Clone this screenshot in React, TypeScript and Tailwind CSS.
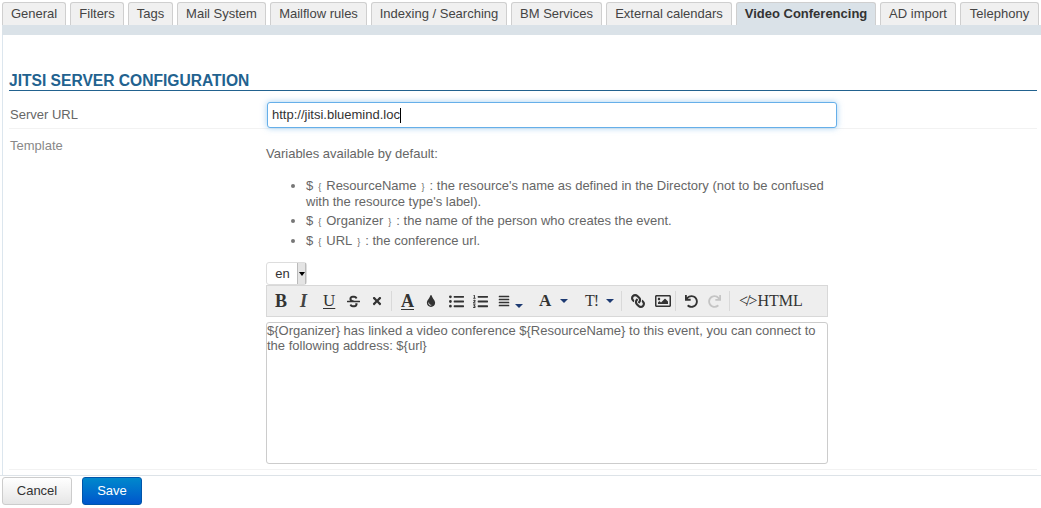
import { FaTimes, FaTint, FaListUl, FaListOl, FaAlignJustify, FaRegImage, FaUndo, FaRedo, FaLink, FaStrikethrough } from "react-icons/fa";

const tabs = [
	{ label: "General", width: "w-[64px]" },
	{ label: "Filters", width: "w-[54px]" },
	{ label: "Tags", width: "w-[45px]" },
	{ label: "Mail System", width: "w-[89px]" },
	{ label: "Mailflow rules", width: "w-[97px]" },
	{ label: "Indexing / Searching", width: "w-[136px]" },
	{ label: "BM Services", width: "w-[91px]" },
	{ label: "External calendars", width: "w-[126px]" },
	{ label: "Video Conferencing", width: "w-[140px]", active: true },
	{ label: "AD import", width: "w-[76px]" },
	{ label: "Telephony", width: "w-[79px]" },
];

const Caret = ({ className }: { className: string }) => (
	<span className={`shrink-0 w-0 h-0 border-x-[4px] border-x-transparent border-t-[4px] border-t-[#1d3a72] ${className}`} />
);

const Sep = ({ className }: { className: string }) => <span className={`shrink-0 w-px h-[20px] bg-[#d9d9d9] ${className}`} />;

const Brace = ({ c }: { c: string }) => <span className="text-[9px] leading-none mx-[5px]">{c}</span>;

const App = () => {
	return (
		<div className="w-[1041px] h-[508px] bg-white flex flex-col overflow-hidden font-['Liberation_Sans',sans-serif] text-[13px] text-[#666]">
			{/* Tabs */}
			<div className="flex gap-1 pl-[2px] pt-[2px] h-[25px] shrink-0">
				{tabs.map((tab) => (
					<div
						key={tab.label}
						className={`${tab.width} h-[23px] shrink-0 flex items-center justify-center rounded-t-[3px] border border-b-0 border-[#cfcfcf] ${
							tab.active ? "bg-[#dae2e8] font-bold text-[#333]" : "bg-[#f0f0f0] text-[#444]"
						}`}
					>
						{tab.label}
					</div>
				))}
			</div>
			<div className="h-[10px] bg-[#dae2e8] ml-[2px] shrink-0" />

			{/* Content */}
			<div className="h-[440px] shrink-0 ml-[2px] border-l border-[#dce6ee] pl-[6px] pr-[4px] pb-[5px] flex flex-col">
				<h2 className="mt-[36px] h-[19px] leading-[20px] text-[15.6px] font-bold text-[#22628f] border-b border-[#22628f] box-content">
					JITSI SERVER CONFIGURATION
				</h2>

				<div className="flex h-[38px] border-b border-[#f2f2f2] shrink-0">
					<div className="w-[258px] pl-px pt-[16px] leading-[16px] text-[#666]">Server URL</div>
					<div className="pt-[11px]">
						<div className="w-[570px] h-[26px] flex items-center px-[4px] bg-white border border-[#66afe9] rounded-[3px] shadow-[0_0_6px_rgba(102,175,233,0.6)] text-[#333]">
							http://jitsi.bluemind.loc<span className="w-px h-[15px] bg-black" />
						</div>
					</div>
				</div>

				<div className="flex flex-1 border-b border-[#f2f2f2]">
					<div className="w-[257px] pl-px pt-[9px] leading-[16px] text-[#888]">Template</div>
					<div className="w-[562px]">
						<p className="mt-[17px] leading-[16px]">Variables available by default:</p>
						<ul className="mt-[16px] ml-[28px] w-[530px] list-disc pl-[12px] leading-[16px] marker:text-[#777]">
							<li>
								$<Brace c="{" />ResourceName<Brace c="}" />: the resource's name as defined in the Directory (not to be confused with the resource type's label).
							</li>
							<li className="mt-[3px]">
								$<Brace c="{" />Organizer<Brace c="}" />: the name of the person who creates the event.
							</li>
							<li className="mt-[4px]">
								$<Brace c="{" />URL<Brace c="}" />: the conference url.
							</li>
						</ul>

						<div className="mt-[13px] w-[41px] h-[23px] flex border border-[#ddd] rounded-[3px] text-[#333]">
							<span className="flex-1 flex items-center justify-center pl-px">en</span>
							<span className="w-[9px] flex items-center justify-center bg-[#e4e4e4] border-x border-[#bbb]">
								<span className="w-0 h-0 border-x-[3px] border-x-transparent border-t-[4px] border-t-black" />
							</span>
						</div>

						{/* Toolbar */}
						<div className="w-[562px] h-[32px] flex items-center bg-[#eeeeee] border border-[#d8d8d8] text-[#333] font-['Liberation_Serif',serif] whitespace-nowrap">
							<span className="ml-[8px] w-[13px] text-[18px] font-bold">B</span>
							<span className="ml-[12px] w-[8px] text-[18px] font-bold italic text-[#444]">I</span>
							<span className="ml-[15px] w-[13px] text-[17px] underline underline-offset-2">U</span>
							<FaStrikethrough className="ml-[11px] shrink-0" size={13} />
							<FaTimes className="ml-[11px] shrink-0" size={12} />
							<Sep className="ml-[8px]" />
							<span className="ml-[9px] w-[14px] text-[18px] font-bold underline underline-offset-2">A</span>
							<FaTint className="ml-[10px] shrink-0" size={12} />
							<FaListUl className="ml-[12px] shrink-0" size={15} />
							<FaListOl className="ml-[9px] shrink-0" size={15} />
							<FaAlignJustify className="ml-[10px] shrink-0" size={12} />
							<Caret className="ml-[5px] mt-[9px]" />
							<span className="ml-[16px] w-[13px] text-[17px] font-bold">A</span>
							<Caret className="ml-[8px]" />
							<span className="ml-[17px] w-[13px] text-[16px] tracking-[-1px]">T!</span>
							<Caret className="ml-[8px]" />
							<Sep className="ml-[7px]" />
							<FaLink className="ml-[9px] shrink-0 -scale-x-100" size={14} />
							<FaRegImage className="ml-[10px] shrink-0" size={16} />
							<Sep className="ml-[4px]" />
							<FaUndo className="ml-[9px] shrink-0" size={13} />
							<FaRedo className="ml-[10px] shrink-0 text-[#c4c4c4]" size={13} />
							<Sep className="ml-[8px]" />
							<span className="ml-[9px] text-[16px]">
								<span className="tracking-[-2px] mr-[2px]">&lt;/&gt;</span>HTML
							</span>
						</div>

						{/* Editor */}
						<div className="mt-[5px] w-[562px] h-[142px] border border-[#ccc] rounded-[3px] text-[#666] leading-[15px]">
							{"${Organizer} has linked a video conference ${ResourceName} to this event, you can connect to the following address: ${url}"}
						</div>
					</div>
				</div>
			</div>

			{/* Footer */}
			<div className="flex gap-[10px] pl-[2px] pt-px border-t border-[#dde3e8] shrink-0">
				<button className="w-[70px] h-[28px] rounded-[3px] border border-[#ccc] bg-gradient-to-b from-white to-[#e6e6e6] text-[#333]">Cancel</button>
				<button className="w-[60px] h-[28px] rounded-[3px] border border-[#0055aa] bg-gradient-to-b from-[#0088cc] to-[#0055cc] text-white">Save</button>
			</div>
		</div>
	);
};

export default App;
